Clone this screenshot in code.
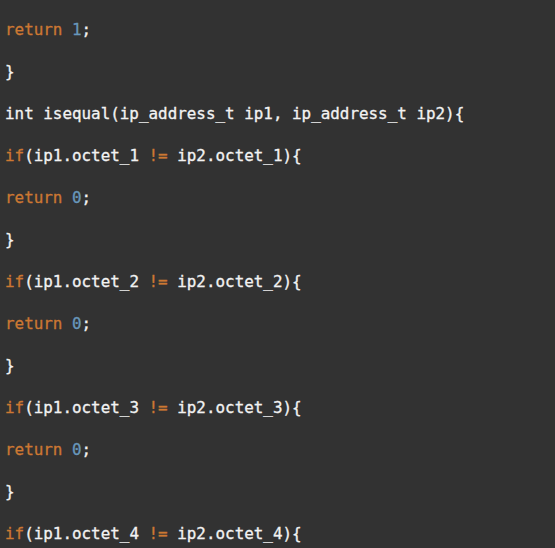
import React from 'react';

type Tok = { t: string; c?: 'kw' | 'num' };

const lines: Tok[][] = [
  [{ t: 'return', c: 'kw' }, { t: ' ' }, { t: '1', c: 'num' }, { t: ';' }],
  [{ t: '}' }],
  [{ t: 'int isequal(ip_address_t ip1, ip_address_t ip2){' }],
  [{ t: 'if', c: 'kw' }, { t: '(ip1.octet_1 ' }, { t: '!=', c: 'kw' }, { t: ' ip2.octet_1){' }],
  [{ t: 'return', c: 'kw' }, { t: ' ' }, { t: '0', c: 'num' }, { t: ';' }],
  [{ t: '}' }],
  [{ t: 'if', c: 'kw' }, { t: '(ip1.octet_2 ' }, { t: '!=', c: 'kw' }, { t: ' ip2.octet_2){' }],
  [{ t: 'return', c: 'kw' }, { t: ' ' }, { t: '0', c: 'num' }, { t: ';' }],
  [{ t: '}' }],
  [{ t: 'if', c: 'kw' }, { t: '(ip1.octet_3 ' }, { t: '!=', c: 'kw' }, { t: ' ip2.octet_3){' }],
  [{ t: 'return', c: 'kw' }, { t: ' ' }, { t: '0', c: 'num' }, { t: ';' }],
  [{ t: '}' }],
  [{ t: 'if', c: 'kw' }, { t: '(ip1.octet_4 ' }, { t: '!=', c: 'kw' }, { t: ' ip2.octet_4){' }],
];

const colour = (c?: 'kw' | 'num') =>
  c === 'kw' ? 'text-[#cc7832]' : c === 'num' ? 'text-[#6897bb]' : 'text-[#f2f2f2]';

export default function App() {
  return (
    <div className="w-[555px] h-[548px] overflow-hidden bg-[#323232] pt-[9px] pl-[5px] font-['DejaVu_Sans_Mono','Liberation_Mono',monospace] text-[15.9px] [-webkit-text-stroke:0.3px]">
      {lines.map((line, i) => (
        <div key={i} className="h-[42px] leading-[42px] whitespace-pre">
          {line.map((tok, j) => (
            <span key={j} className={colour(tok.c)}>
              {tok.t}
            </span>
          ))}
        </div>
      ))}
    </div>
  );
}
